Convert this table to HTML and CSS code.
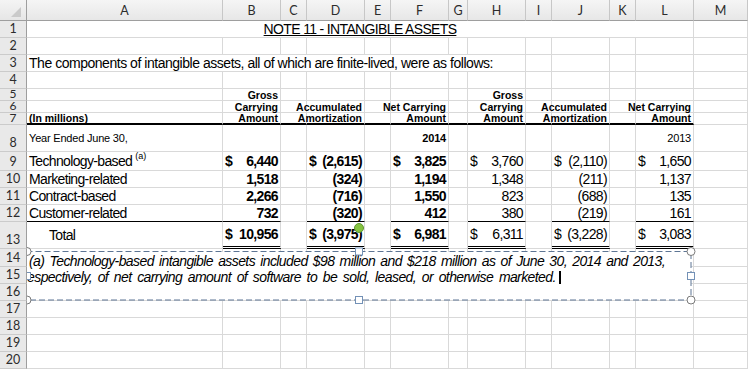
FILE: index.html
```html
<!DOCTYPE html>
<html>
<head>
<meta charset="utf-8">
<link rel="stylesheet" href="styles.css">
</head>
<body>
<div class="sheet">
  <!-- column headers -->
  <div class="corner"></div>
  <div class="ch">A</div><div class="ch">B</div><div class="ch">C</div><div class="ch">D</div><div class="ch">E</div><div class="ch">F</div><div class="ch">G</div><div class="ch">H</div><div class="ch">I</div><div class="ch">J</div><div class="ch">K</div><div class="ch">L</div><div class="ch">M</div>

  <!-- row 1 -->
  <div class="rh">1</div>
  <div class="c title span12">NOTE 11 - INTANGIBLE ASSETS</div>
  <div class="c"></div>

  <!-- row 2 -->
  <div class="rh">2</div>
  <div class="c"></div><div class="c"></div><div class="c"></div><div class="c"></div><div class="c"></div><div class="c"></div><div class="c"></div><div class="c"></div><div class="c"></div><div class="c"></div><div class="c"></div><div class="c"></div><div class="c"></div>

  <!-- row 3 -->
  <div class="rh">3</div>
  <div class="c span8 intro">The components of intangible assets, all of which are finite-lived, were as follows:</div>
  <div class="c"></div><div class="c"></div><div class="c"></div><div class="c"></div><div class="c"></div>

  <!-- row 4 -->
  <div class="rh">4</div>
  <div class="c"></div><div class="c"></div><div class="c"></div><div class="c"></div><div class="c"></div><div class="c"></div><div class="c"></div><div class="c"></div><div class="c"></div><div class="c"></div><div class="c"></div><div class="c"></div><div class="c"></div>

  <!-- row 5 -->
  <div class="rh short">5</div>
  <div class="c hd"></div>
  <div class="c hd r">Gross</div>
  <div class="c hd"></div><div class="c hd"></div><div class="c hd"></div><div class="c hd"></div><div class="c hd"></div>
  <div class="c hd r">Gross</div>
  <div class="c hd"></div><div class="c hd"></div><div class="c hd"></div><div class="c hd"></div><div class="c hd"></div>

  <!-- row 6 -->
  <div class="rh short">6</div>
  <div class="c hd"></div>
  <div class="c hd r">Carrying</div>
  <div class="c hd"></div>
  <div class="c hd r">Accumulated</div>
  <div class="c hd"></div>
  <div class="c hd r">Net Carrying</div>
  <div class="c hd"></div>
  <div class="c hd r">Carrying</div>
  <div class="c hd"></div>
  <div class="c hd r">Accumulated</div>
  <div class="c hd"></div>
  <div class="c hd r">Net Carrying</div>
  <div class="c hd"></div>

  <!-- row 7 -->
  <div class="rh short">7</div>
  <div class="c hd line2">(In millions)</div>
  <div class="c hd r line2">Amount</div>
  <div class="c hd line2"></div>
  <div class="c hd r line2">Amortization</div>
  <div class="c hd line2"></div>
  <div class="c hd r line2">Amount</div>
  <div class="c hd line2"></div>
  <div class="c hd r line2">Amount</div>
  <div class="c hd line2"></div>
  <div class="c hd r line2">Amortization</div>
  <div class="c hd line2"></div>
  <div class="c hd r line2">Amount</div>
  <div class="c hd"></div>

  <!-- row 8 -->
  <div class="rh">8</div>
  <div class="c sm">Year Ended June 30,</div>
  <div class="c"></div><div class="c"></div><div class="c"></div><div class="c"></div>
  <div class="c sm b r">2014</div>
  <div class="c"></div><div class="c"></div><div class="c"></div><div class="c"></div><div class="c"></div>
  <div class="c sm r">2013</div>
  <div class="c"></div>

  <!-- row 9 -->
  <div class="rh">9</div>
  <div class="c">Technology-based<span class="sup">(a)</span></div>
  <div class="c b acc"><span>$</span><span>6,440</span></div>
  <div class="c"></div>
  <div class="c b acc"><span>$</span><span>(2,615)</span></div>
  <div class="c"></div>
  <div class="c b acc"><span>$</span><span>3,825</span></div>
  <div class="c"></div>
  <div class="c acc"><span>$</span><span>3,760</span></div>
  <div class="c"></div>
  <div class="c acc"><span>$</span><span>(2,110)</span></div>
  <div class="c"></div>
  <div class="c acc"><span>$</span><span>1,650</span></div>
  <div class="c"></div>

  <!-- row 10 -->
  <div class="rh">10</div>
  <div class="c">Marketing-related</div>
  <div class="c b r">1,518</div>
  <div class="c"></div>
  <div class="c b r">(324)</div>
  <div class="c"></div>
  <div class="c b r">1,194</div>
  <div class="c"></div>
  <div class="c r">1,348</div>
  <div class="c"></div>
  <div class="c r">(211)</div>
  <div class="c"></div>
  <div class="c r">1,137</div>
  <div class="c"></div>

  <!-- row 11 -->
  <div class="rh">11</div>
  <div class="c">Contract-based</div>
  <div class="c b r">2,266</div>
  <div class="c"></div>
  <div class="c b r">(716)</div>
  <div class="c"></div>
  <div class="c b r">1,550</div>
  <div class="c"></div>
  <div class="c r">823</div>
  <div class="c"></div>
  <div class="c r">(688)</div>
  <div class="c"></div>
  <div class="c r">135</div>
  <div class="c"></div>

  <!-- row 12 -->
  <div class="rh">12</div>
  <div class="c line1">Customer-related</div>
  <div class="c b r line1">732</div>
  <div class="c"></div>
  <div class="c b r line1">(320)</div>
  <div class="c"></div>
  <div class="c b r line1">412</div>
  <div class="c"></div>
  <div class="c r line1">380</div>
  <div class="c"></div>
  <div class="c r line1">(219)</div>
  <div class="c"></div>
  <div class="c r line1">161</div>
  <div class="c"></div>

  <!-- row 13 -->
  <div class="rh">13</div>
  <div class="c total">Total</div>
  <div class="c b acc dbl"><span>$</span><span>10,956</span></div>
  <div class="c"></div>
  <div class="c b acc dbl"><span>$</span><span>(3,975)</span></div>
  <div class="c"></div>
  <div class="c b acc dbl"><span>$</span><span>6,981</span></div>
  <div class="c"></div>
  <div class="c acc dbl"><span>$</span><span>6,311</span></div>
  <div class="c"></div>
  <div class="c acc dbl"><span>$</span><span>(3,228)</span></div>
  <div class="c"></div>
  <div class="c acc dbl"><span>$</span><span>3,083</span></div>
  <div class="c"></div>

  <!-- rows 14-20 -->
  <div class="rh">14</div>
  <div class="c"></div><div class="c"></div><div class="c"></div><div class="c"></div><div class="c"></div><div class="c"></div><div class="c"></div><div class="c"></div><div class="c"></div><div class="c"></div><div class="c"></div><div class="c"></div><div class="c"></div>
  <div class="rh">15</div>
  <div class="c"></div><div class="c"></div><div class="c"></div><div class="c"></div><div class="c"></div><div class="c"></div><div class="c"></div><div class="c"></div><div class="c"></div><div class="c"></div><div class="c"></div><div class="c"></div><div class="c"></div>
  <div class="rh">16</div>
  <div class="c"></div><div class="c"></div><div class="c"></div><div class="c"></div><div class="c"></div><div class="c"></div><div class="c"></div><div class="c"></div><div class="c"></div><div class="c"></div><div class="c"></div><div class="c"></div><div class="c"></div>
  <div class="rh">17</div>
  <div class="c"></div><div class="c"></div><div class="c"></div><div class="c"></div><div class="c"></div><div class="c"></div><div class="c"></div><div class="c"></div><div class="c"></div><div class="c"></div><div class="c"></div><div class="c"></div><div class="c"></div>
  <div class="rh">18</div>
  <div class="c"></div><div class="c"></div><div class="c"></div><div class="c"></div><div class="c"></div><div class="c"></div><div class="c"></div><div class="c"></div><div class="c"></div><div class="c"></div><div class="c"></div><div class="c"></div><div class="c"></div>
  <div class="rh">19</div>
  <div class="c"></div><div class="c"></div><div class="c"></div><div class="c"></div><div class="c"></div><div class="c"></div><div class="c"></div><div class="c"></div><div class="c"></div><div class="c"></div><div class="c"></div><div class="c"></div><div class="c"></div>
  <div class="rh">20</div>
  <div class="c"></div><div class="c"></div><div class="c"></div><div class="c"></div><div class="c"></div><div class="c"></div><div class="c"></div><div class="c"></div><div class="c"></div><div class="c"></div><div class="c"></div><div class="c"></div><div class="c"></div>

  <!-- text box (floating shape over the grid) -->
  <div class="textbox">
    <div class="tb-l1">(a) Technology-based intangible assets included $98 million and $218 million as of June 30, 2014 and 2013,</div>
    <div class="tb-l2">respectively, of net carrying amount of software to be sold, leased, or otherwise marketed.<span class="caret"></span></div>
  </div>
  <svg class="frame" width="748" height="369" viewBox="0 0 748 369">
    <rect x="26.5" y="251.5" width="664.5" height="48.5" fill="none" stroke="#5d7594" stroke-width="1" stroke-dasharray="6 3"/>
    <circle cx="359" cy="228" r="4.5" fill="#86c440" stroke="#5e9630" stroke-width="1"/>
    <circle cx="27" cy="251.5" r="4" fill="#fff" stroke="#7a7a7a" stroke-width="1"/>
    <circle cx="691" cy="251.5" r="4" fill="#fff" stroke="#7a7a7a" stroke-width="1"/>
    <circle cx="27" cy="300" r="4" fill="#fff" stroke="#7a7a7a" stroke-width="1"/>
    <circle cx="691" cy="300" r="4" fill="#fff" stroke="#7a7a7a" stroke-width="1"/>
    <rect x="355.5" y="248" width="7" height="7" fill="#fff" stroke="#7391b6" stroke-width="1"/>
    <rect x="355.5" y="296.5" width="7" height="7" fill="#fff" stroke="#7391b6" stroke-width="1"/>
    <rect x="687.5" y="272.5" width="7" height="7" fill="#fff" stroke="#7391b6" stroke-width="1"/>
    <rect x="23.5" y="272.5" width="7" height="7" fill="#fff" stroke="#7391b6" stroke-width="1"/>
  </svg>
</div>
</body>
</html>
```

FILE: styles.css
```css
* { box-sizing: border-box; }

html, body {
  margin: 0;
  padding: 0;
  background: #fff;
}

body {
  width: 748px;
  height: 369px;
  overflow: hidden;
  font-family: "Liberation Sans", Arial, sans-serif;
  color: #000;
}

.sheet {
  position: relative;
  display: grid;
  grid-template-columns: 27px 196px 58px 26px 58px 26px 58px 19px 58px 26px 58px 26px 58px 54px;
  grid-template-rows: 21px repeat(4, 17px) repeat(3, 12px) 27px 19px repeat(3, 17px) 27px 18px repeat(6, 17px);
  width: 748px;
  height: 369px;
}

/* headers */
.corner {
  position: relative;
  background: linear-gradient(#f4f4f4, #e6e6e6);
  border-right: 1px solid #9e9e9e;
  border-bottom: 1px solid #9e9e9e;
  z-index: 4;
}
.corner::after {
  content: "";
  position: absolute;
  right: 5px;
  bottom: 3px;
  width: 0;
  height: 0;
  border-left: 10px solid transparent;
  border-bottom: 10px solid #cacaca;
}

.ch {
  display: flex;
  align-items: center;
  justify-content: center;
  background: linear-gradient(#f5f5f5, #e7e7e7);
  border-right: 1px solid #c7c7c7;
  border-bottom: 1px solid #9e9e9e;
  font-family: Lato, "Open Sans", sans-serif;
  font-size: 12.5px;
  color: #2c2c2c;
  padding-top: 1px;
}

.rh {
  position: relative;
  z-index: 4;
  display: flex;
  align-items: flex-end;
  justify-content: center;
  overflow: hidden;
  background: #e9e9e9;
  border-right: 1px solid #9e9e9e;
  border-bottom: 1px solid #cbcbcb;
  font-family: Lato, "Open Sans", sans-serif;
  font-size: 12.5px;
  line-height: 16px;
  color: #2c2c2c;
}

.rh.short {
  line-height: 13px;
  font-size: 12px;
}

/* cells */
.c {
  display: flex;
  align-items: center;
  min-width: 0;
  white-space: nowrap;
  border-right: 1px solid #d9d9d9;
  border-bottom: 1px solid #d9d9d9;
  padding: 0 2px;
  font-size: 14px;
  letter-spacing: -0.65px;
}

.span12 { grid-column: span 12; }
.span8 { grid-column: span 8; }

.title {
  justify-content: center;
  text-decoration: underline;
}

.intro { letter-spacing: -0.47px; }

.r { justify-content: flex-end; }
.acc { justify-content: space-between; }
.b { font-weight: bold; }

.hd {
  font-size: 10.5px;
  font-weight: bold;
  letter-spacing: 0;
  line-height: 12px;
}

.sm {
  font-size: 11px;
  letter-spacing: -0.2px;
}

.total { padding-left: 22px; }

.sup {
  font-size: 9px;
  letter-spacing: 0;
  margin-left: 3px;
  position: relative;
  top: -5px;
}

.line2 { border-bottom: 2px solid #000; }
.line1 { border-bottom: 1px solid #000; }
.dbl { border-bottom: 3px double #000; }

/* floating text box */
.textbox {
  position: absolute;
  left: 27px;
  top: 252px;
  width: 664px;
  height: 48px;
  background: #fff;
  overflow: hidden;
  z-index: 2;
  font-size: 14px;
  font-style: italic;
  letter-spacing: -0.6px;
  line-height: 16px;
  padding-top: 1px;
  white-space: nowrap;
}

.tb-l1 {
  width: 636px;
  margin-left: 2px;
  white-space: normal;
  text-align: justify;
  text-align-last: justify;
}

.tb-l2 {
  margin-left: -4px;
  word-spacing: 2.4px;
}

.caret {
  display: inline-block;
  width: 2px;
  height: 13px;
  background: #000;
  margin-left: 3px;
  vertical-align: -2px;
}

.frame {
  position: absolute;
  left: 0;
  top: 0;
  z-index: 3;
  pointer-events: none;
}
```
